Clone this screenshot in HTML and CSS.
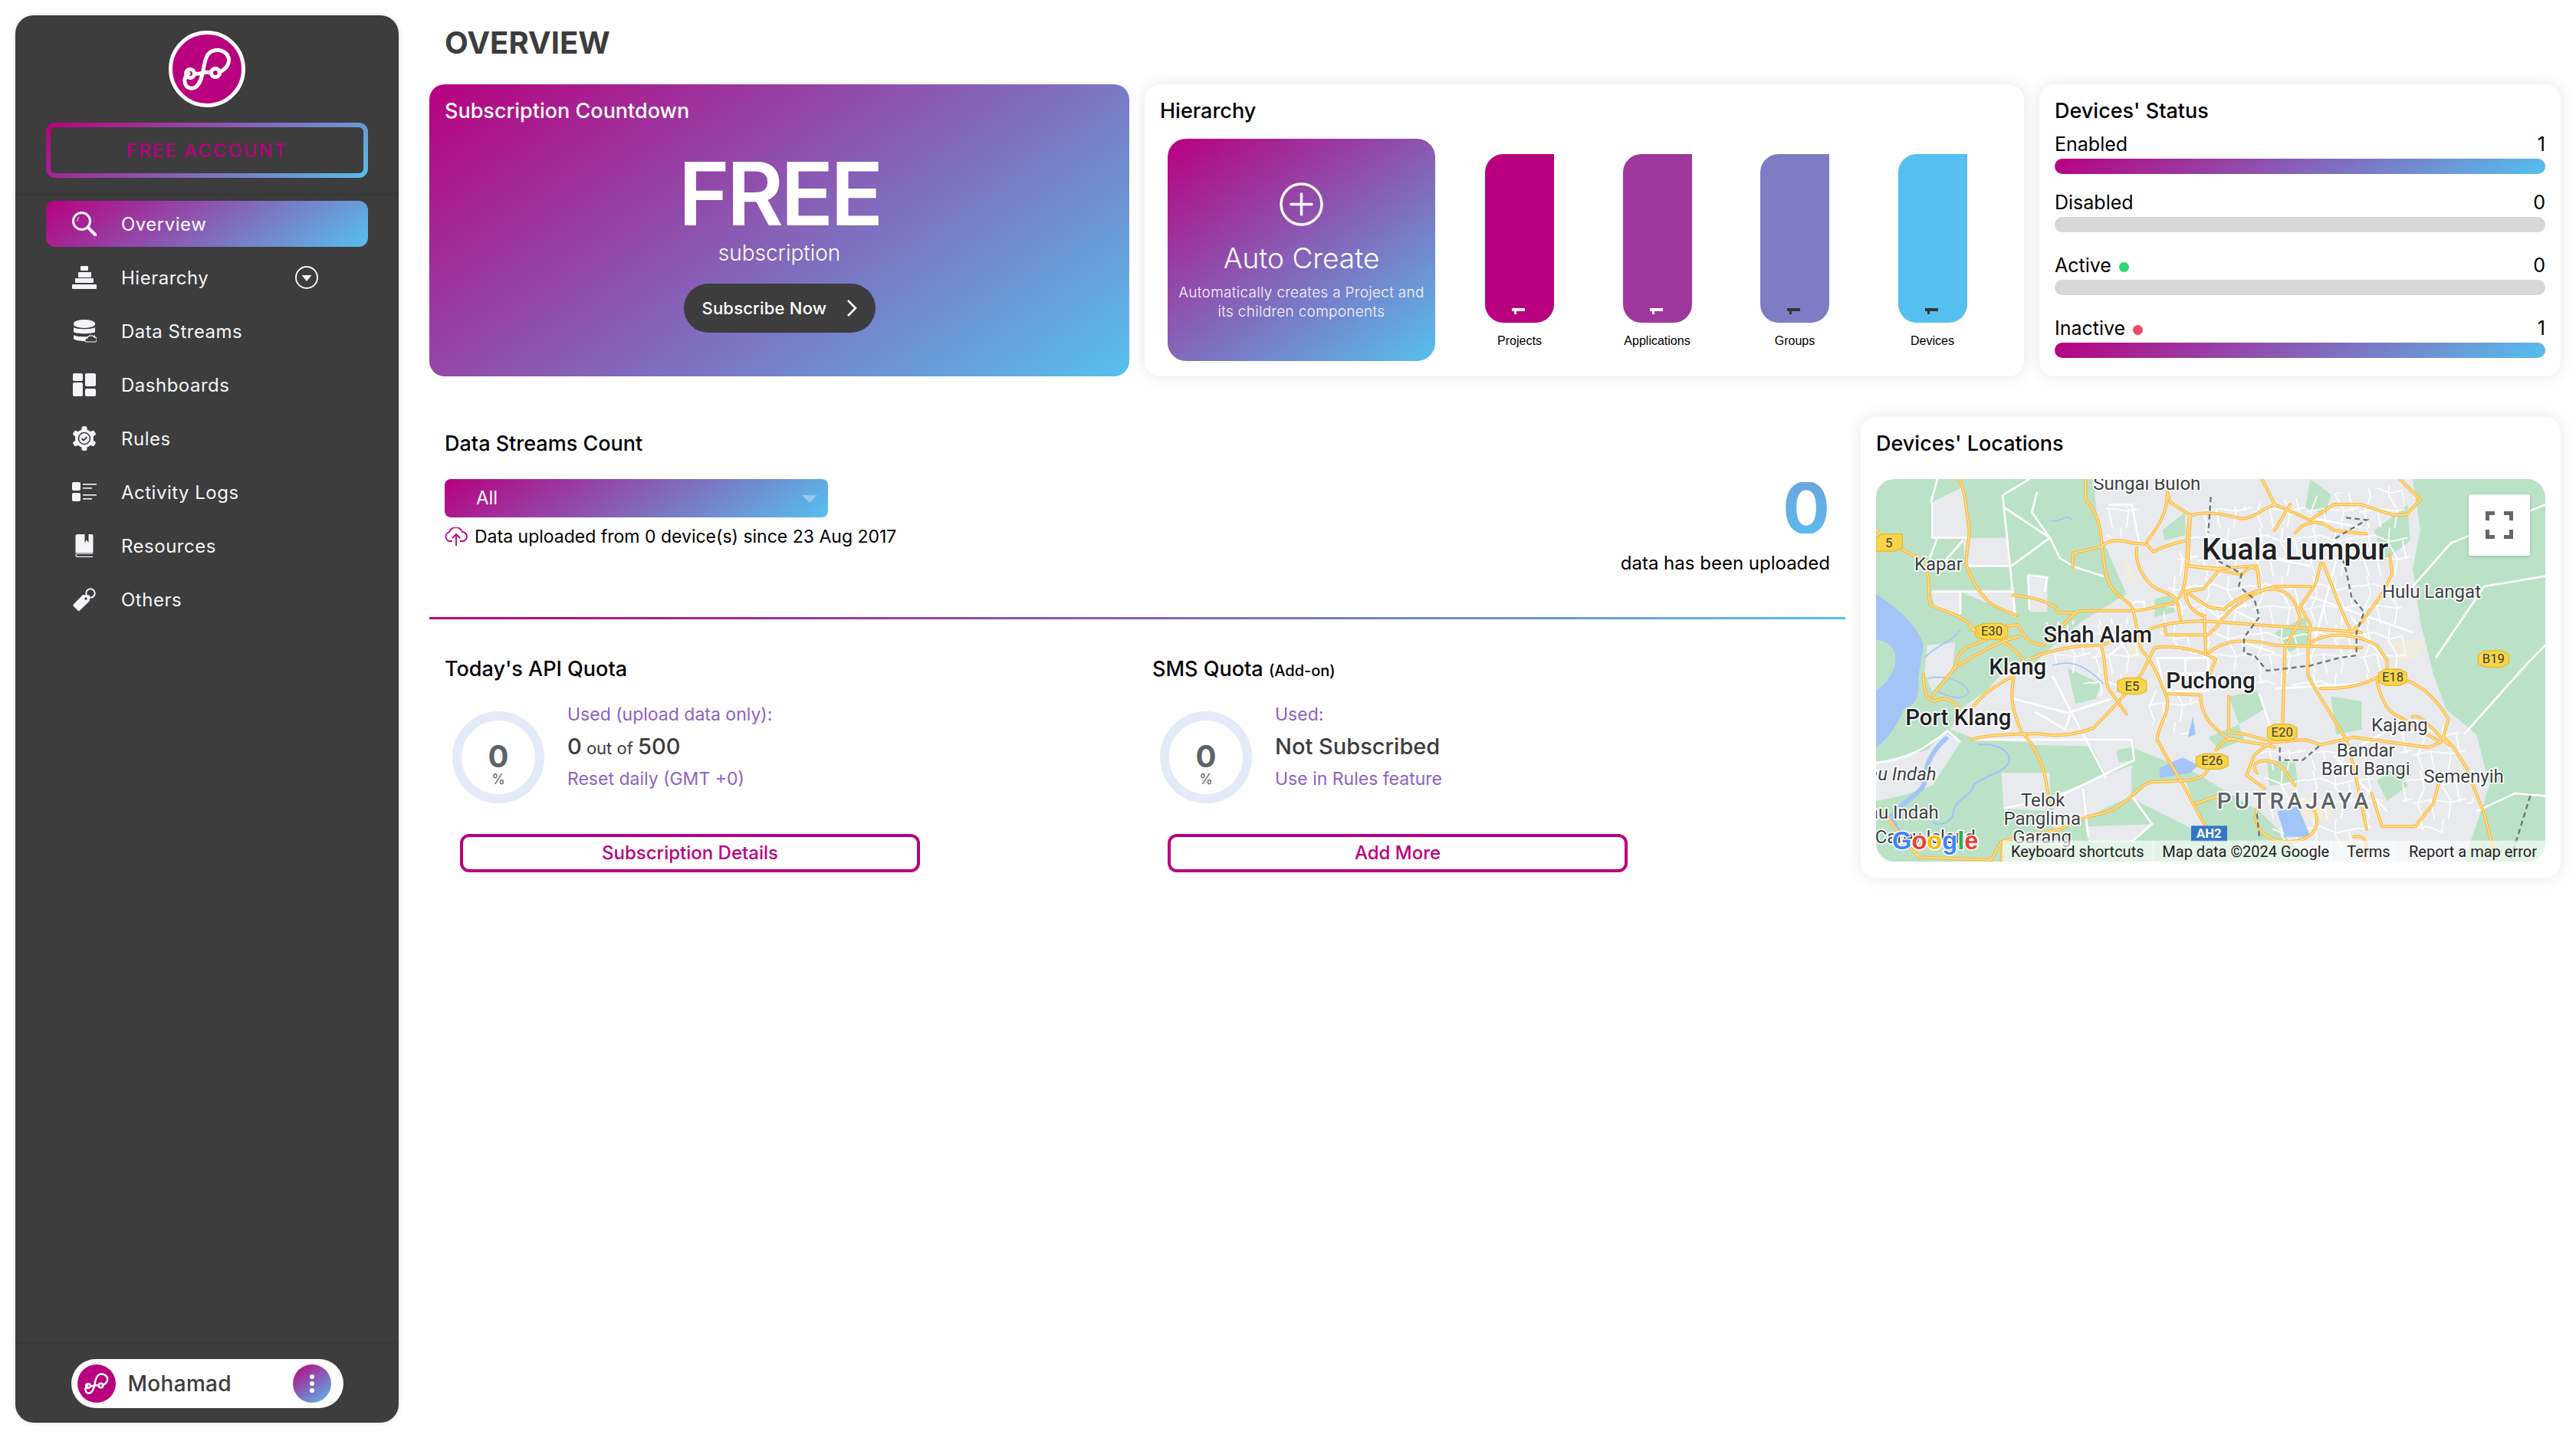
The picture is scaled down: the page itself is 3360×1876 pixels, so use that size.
FILE: index.html
```html
<!DOCTYPE html>
<html>
<head>
    <title>Overview</title>
    <link rel="stylesheet" href="styles.css">
</head>
<body>
    <svg class="defs" width="0" height="0">
        <symbol id="logo-mark" viewBox="0 0 100 100">
            <g fill="none" stroke="#fff" stroke-width="5" stroke-linecap="round">
                <path d="M66 54C76 50 80 42 78 35 75 26 64 23 56 27 48 31 47 42 45 52 43 62 40 74 31 75 24 76 20 70 21 63 22 59 24 58 26 56"/>
                <path d="M34 56C40 58 47 52 55 55"/>
                <circle cx="28" cy="56" r="5.500"/>
                <circle cx="61" cy="55" r="5.500"/>
            </g>
        </symbol>
        <pattern id="street-mesh" width="210" height="190" patternUnits="userSpaceOnUse">
            <path d="M0 40L60 30 120 55 210 35M30 0L45 70 20 130 40 190M120 0L115 60 150 120 140 190M0 130L70 115 150 125 210 110M70 115L85 190M170 50L185 125" fill="none" stroke="#fff" stroke-width="5"/>
        </pattern>
    </svg>

    <div class="page">
        <aside class="sidebar">
            <div class="logo">
                <svg width="100" height="100" viewBox="0 0 100 100">
                    <circle cx="50" cy="50" r="47.500" fill="#b8007f" stroke="#fff" stroke-width="5"/>
                    <use href="#logo-mark" width="100" height="100"/>
                </svg>
            </div>
            <div class="account-badge"><div class="account-badge-inner">FREE ACCOUNT</div></div>
            <div class="side-divider"></div>

            <nav class="nav">
                <a class="nav-item active">
                    <svg class="nav-icon" viewBox="0 0 32 32">
                        <circle cx="12.500" cy="12.500" r="11" fill="none" stroke="#fff" stroke-width="3"/>
                        <path d="M7 13c0-2 1-5 2.500-6" fill="none" stroke="#fff" stroke-width="1"/>
                        <path d="M21 21l9.500 9.500" stroke="#fff" stroke-width="4" stroke-linecap="round"/>
                    </svg>
                    <span>Overview</span>
                </a>
                <a class="nav-item">
                    <svg class="nav-icon" viewBox="0 0 32 30">
                        <rect x="11" y="0" width="10" height="6" rx="1"/>
                        <rect x="8" y="8" width="17" height="7" rx="1"/>
                        <rect x="4" y="16" width="24" height="6" rx="1"/>
                        <rect x="0" y="24" width="32" height="6" rx="1"/>
                    </svg>
                    <span>Hierarchy</span>
                    <svg class="nav-caret" width="30" height="30" viewBox="0 0 30 30">
                        <circle cx="15" cy="15" r="14" fill="none" stroke="#f3f4f8" stroke-width="2"/>
                        <path d="M8.500 12h13L15 20z" fill="#f3f4f8"/>
                    </svg>
                </a>
                <a class="nav-item">
                    <svg class="nav-icon" viewBox="0 0 32 30">
                        <path d="M2 5a14 5 0 0 1 28 0v1a14 5 0 0 1-28 0z"/>
                        <path d="M2 10c3 3 25 3 28 0v6c-3 3-25 3-28 0z"/>
                        <path d="M2 20c3 3 25 3 28 0v5c0 4-25 4-28 0z"/>
                        <path d="M19 29c-3 0-3-5 1-5 1-4 8-4 9-1 4-1 4 6 1 6z" fill="#3d3d3d" stroke="#f3f4f8" stroke-width="1.200"/>
                    </svg>
                    <span>Data Streams</span>
                </a>
                <a class="nav-item">
                    <svg class="nav-icon" viewBox="-1 0 32 30">
                        <rect x="0" y="0" width="13" height="10" rx="2"/>
                        <rect x="0" y="12" width="13" height="18" rx="2"/>
                        <rect x="16" y="0" width="14" height="17" rx="2"/>
                        <rect x="16" y="20" width="14" height="10" rx="2"/>
                    </svg>
                    <span>Dashboards</span>
                </a>
                <a class="nav-item">
                    <svg class="nav-icon" viewBox="0 0 32 32">
                        <g>
                            <circle cx="16" cy="16" r="12"/>
                            <rect x="12.500" y="0" width="7" height="32" rx="2.500"/>
                            <rect x="12.500" y="0" width="7" height="32" rx="2.500" transform="rotate(60 16 16)"/>
                            <rect x="12.500" y="0" width="7" height="32" rx="2.500" transform="rotate(120 16 16)"/>
                        </g>
                        <circle cx="16" cy="16" r="7.500" fill="none" stroke="#3d3d3d" stroke-width="1.600"/>
                        <path d="M12.500 16l2.500 2.500 4.500-4.500" fill="none" stroke="#3d3d3d" stroke-width="1.800"/>
                    </svg>
                    <span>Rules</span>
                </a>
                <a class="nav-item">
                    <svg class="nav-icon" viewBox="0 0 32 26">
                        <rect x="0" y="0" width="11" height="11" rx="2"/>
                        <rect x="0" y="14" width="11" height="11" rx="2"/>
                        <rect x="14" y="2" width="18" height="1.600"/>
                        <rect x="14" y="7" width="12" height="1.600"/>
                        <rect x="14" y="16" width="18" height="1.600"/>
                        <rect x="14" y="21" width="12" height="1.600"/>
                    </svg>
                    <span>Activity Logs</span>
                </a>
                <a class="nav-item">
                    <svg class="nav-icon" viewBox="-4.500 0 32 30">
                        <path d="M2.500 0H12v11l2.500-3.500L17 11V0h4a2 2 0 0 1 2 2v22H2.500A2.500 2.500 0 0 0 0 25V2.500A2.500 2.500 0 0 1 2.500 0z"/>
                        <path d="M22.500 25.200H2.600a1.900 1.900 0 0 0 0 4.100h19.900" fill="none" stroke="#f3f4f8" stroke-width="1.200"/>
                    </svg>
                    <span>Resources</span>
                </a>
                <a class="nav-item">
                    <svg class="nav-icon" viewBox="-1 0 32 30">
                        <path d="M.8 21.500L13 9l9 .5V17L9 29.500c-.8.7-1.700.7-2.500 0L1 24c-.7-.7-.7-1.700-.2-2.500z"/>
                        <circle cx="17" cy="14" r="1.700" fill="#3d3d3d"/>
                        <circle cx="23" cy="7" r="5.700" fill="none" stroke="#f3f4f8" stroke-width="2"/>
                    </svg>
                    <span>Others</span>
                </a>
            </nav>

            <div class="side-footer">
                <div class="user-pill">
                    <div class="user-avatar"><svg width="50" height="50"><use href="#logo-mark" width="50" height="50"/></svg></div>
                    <span class="user-name">Mohamad</span>
                    <div class="user-menu"><i></i><i></i><i></i></div>
                </div>
            </div>
        </aside>

        <main class="main">
            <h1 class="page-title">OVERVIEW</h1>

            <section class="top-row">
                <div class="card plan-card">
                    <h2 class="card-title">Subscription Countdown</h2>
                    <div class="plan-name">FREE</div>
                    <div class="plan-sub">subscription</div>
                    <a class="subscribe-btn">
                        <span>Subscribe Now</span>
                        <svg width="14" height="24" viewBox="0 0 14 24"><path d="M2 2l10 10L2 22" fill="none" stroke="#fff" stroke-width="2.500"/></svg>
                    </a>
                </div>

                <div class="card hierarchy-card">
                    <h2 class="card-title">Hierarchy</h2>
                    <div class="hierarchy-body">
                        <div class="auto-create">
                            <svg width="57" height="57" viewBox="0 0 57 57">
                                <circle cx="28.500" cy="28.500" r="26.500" fill="none" stroke="#fff" stroke-width="3.500"/>
                                <path d="M28.500 15v27M15 28.500h27" stroke="#fff" stroke-width="3.500" stroke-linecap="round"/>
                            </svg>
                            <div class="auto-title">Auto Create</div>
                            <p class="auto-desc">Automatically creates a Project and<br>its children components</p>
                        </div>
                        <div class="levels">
                            <div class="level"><div class="level-bar bar-projects"><i class="tick"></i></div><span>Projects</span></div>
                            <div class="level"><div class="level-bar bar-apps"><i class="tick"></i></div><span>Applications</span></div>
                            <div class="level"><div class="level-bar bar-groups"><i class="tick dark"></i></div><span>Groups</span></div>
                            <div class="level"><div class="level-bar bar-devices"><i class="tick dark"></i></div><span>Devices</span></div>
                        </div>
                    </div>
                </div>

                <div class="card status-card">
                    <h2 class="card-title">Devices' Status</h2>
                    <div class="stat first">
                        <div class="stat-head"><span>Enabled</span><span>1</span></div>
                        <div class="stat-bar filled"></div>
                    </div>
                    <div class="stat">
                        <div class="stat-head"><span>Disabled</span><span>0</span></div>
                        <div class="stat-bar"></div>
                    </div>
                    <div class="stat wide">
                        <div class="stat-head"><span>Active <i class="dot dot-green"></i></span><span>0</span></div>
                        <div class="stat-bar"></div>
                    </div>
                    <div class="stat wide">
                        <div class="stat-head"><span>Inactive <i class="dot dot-red"></i></span><span>1</span></div>
                        <div class="stat-bar filled"></div>
                    </div>
                </div>
            </section>

            <section class="bottom-row">
                <div class="usage">
                    <div class="streams">
                        <div class="streams-left">
                            <h2 class="card-title">Data Streams Count</h2>
                            <div class="stream-select">All</div>
                            <div class="upload-note">
                                <svg width="30" height="24" viewBox="0 0 30 24">
                                    <path d="M10 18H7a6 6 0 0 1-1-11.800A9 9 0 0 1 23 6a6 6 0 0 1 0 12h-3" fill="none" stroke="#b8007f" stroke-width="1.800"/>
                                    <path d="M15 24V10M10 14l5-5 5 5" fill="none" stroke="#b8007f" stroke-width="1.800"/>
                                </svg>
                                <span>Data uploaded from 0 device(s) since 23 Aug 2017</span>
                            </div>
                        </div>
                        <div class="streams-right">
                            <div class="streams-count">0</div>
                            <div class="streams-label">data has been uploaded</div>
                        </div>
                    </div>
                    <div class="gradient-line"></div>
                    <div class="quotas">
                        <div class="quota">
                            <h2 class="card-title">Today's API Quota</h2>
                            <div class="quota-body">
                                <div class="ring"><b>0</b><span>%</span></div>
                                <div class="quota-info">
                                    <div class="quota-note">Used (upload data only):</div>
                                    <div class="quota-value"><span class="big">0</span> out of <span class="big">500</span></div>
                                    <div class="quota-note">Reset daily (GMT +0)</div>
                                </div>
                            </div>
                            <a class="outline-btn">Subscription Details</a>
                        </div>
                        <div class="quota">
                            <h2 class="card-title">SMS Quota <small>(Add-on)</small></h2>
                            <div class="quota-body">
                                <div class="ring"><b>0</b><span>%</span></div>
                                <div class="quota-info">
                                    <div class="quota-note">Used:</div>
                                    <div class="quota-value"><span class="big">Not Subscribed</span></div>
                                    <div class="quota-note">Use in Rules feature</div>
                                </div>
                            </div>
                            <a class="outline-btn">Add More</a>
                        </div>
                    </div>
                </div>

                <div class="card map-card">
                    <h2 class="card-title">Devices' Locations</h2>
                    <div class="map">
                        <svg class="map-svg" viewBox="0 0 2619 1497" width="873" height="499">
                            <rect width="2619" height="1497" fill="#bbe2c6"/>
                            <!-- built up areas -->
                            <g fill="#e8eaed">
                                <path d="M850 0L2100 0 2130 200 2100 350 2130 560 2180 760 2230 900 2350 1000 2400 1200 2300 1497 1700 1497 1500 1300 1250 1150 1000 1050 600 1040 530 850 640 700 800 560 980 450 870 200z"/>
                                <path d="M220 90L340 30 360 230 500 240 500 340 350 340 340 230 220 230z"/>
                                <path d="M370 230H510L530 340H350z"/>
                                <path d="M330 440H540L550 530 470 500 400 470z"/>
                                <path d="M215 440H330V530L230 500z"/>
                                <path d="M530 720L660 800 760 920 830 1040 600 1030 400 1020 290 980 330 900 430 830z"/>
                                <path d="M840 1040L1010 1040 1010 1100 900 1160z"/>
                                <path d="M490 1150H680L680 1300 500 1290z"/>
                                <path d="M595 375L670 385 670 520 600 520z"/>
                                <path d="M200 650L310 640 300 740 220 830 190 760z"/>
                                <path d="M0 1110L200 1060 270 990 330 1030 220 1200 100 1240 0 1260z"/>
                                <path d="M690 1240L1000 1120 1000 1240 830 1320 700 1370z"/>
                                <path d="M830 1360L1080 1350 1000 1420 830 1420z"/>
                                <path d="M1080 1180L1210 1180 1300 1400 1000 1250z"/>
                            </g>
                            <g fill="#bbe2c6">
                                <path d="M1090 470L1160 450 1170 520 1090 540z"/>
                                <path d="M1120 200L1210 130 1210 220 1130 240z"/>
                                <path d="M1700 0L1780 60 1760 140 1680 110z"/>
                                <path d="M1380 850L1490 830 1520 900 1420 960z"/>
                                <path d="M750 740L880 800 860 860 780 880z"/>
                                <path d="M1780 850L1900 870 1900 980 1800 1000z"/>
                                <path d="M1950 200L2080 100 2090 240 1990 320z"/>
                                <path d="M1530 1100L1640 1110 1650 1190 1540 1200z"/>
                                <path d="M940 1060L1000 1050 1010 1100 950 1110z"/>
                                <path d="M1300 1010L1420 960 1440 1020 1340 1060z"/>
                                <path d="M1960 1180L2050 1120 2080 1200 2000 1260z"/>
                                <path d="M1560 600L1680 540 1700 640 1610 680z"/>
                            </g>
                            <g fill="#f1ecdd">
                                <path d="M970 300L1010 360 1020 420 980 390z"/>
                                <path d="M980 640L1040 650 1060 700 990 700z"/>
                                <path d="M1640 1240L1790 1260 1780 1340 1660 1330z"/>
                                <path d="M2020 640L2150 620 2120 700 2050 710z"/>
                            </g>
                            <!-- street grid over the dense parts -->
                            <g fill="url(#street-mesh)">
                                <path d="M1230 130L2060 20 2090 330 2050 560 2080 720 1880 820 1500 800 1300 700 1100 650 1140 440z"/>
                                <path d="M660 560L1000 540 1040 760 880 850 700 720z"/>
                                <path d="M1500 1060L1900 1060 2000 1300 1860 1440 1560 1420z"/>
                                <path d="M1060 820L1260 860 1220 1010 1070 960z"/>
                                <path d="M900 90L1030 120 1040 220 900 230z"/>
                                <path d="M2050 900L2300 1000 2340 1260 2200 1400 2060 1340z"/>
                            </g>
                            <!-- water -->
                            <path d="M0 450C80 500 170 580 185 650L165 780C170 850 160 880 110 900 90 940 60 1010 0 1050zM0 630C60 630 90 680 70 740 50 790 20 820 0 825z" fill="#a3c4f7" fill-rule="evenodd"/>
                            <g fill="none" stroke="#a3c4f7">
                                <path d="M400 1040C480 1030 530 1070 520 1110 500 1150 400 1170 380 1200 380 1240 300 1250 300 1320 280 1350 240 1360 220 1340" stroke-width="7"/>
                                <path d="M280 1010C220 1060 190 1120 190 1190 170 1240 100 1260 60 1320 80 1370 100 1400 120 1420" stroke-width="18"/>
                                <path d="M190 700C230 650 300 640 330 590M200 780C290 760 370 810 360 840 330 870 280 850 240 830" stroke-width="5"/>
                                <path d="M680 160C720 180 730 130 770 160M690 730C770 700 830 740 890 800" stroke-width="5"/>
                            </g>
                            <path d="M1110 1130L1200 1090 1260 1120 1230 1150 1110 1170zM1240 930L1250 1000 1220 1010zM1570 1300L1650 1280 1700 1400 1600 1400z" fill="#a3c4f7"/>
                            <!-- minor roads -->
                            <g class="minor-roads">
                                <path d="M495 60L545 540M500 110L680 230M680 230L530 340M350 340H530M220 230H360M215 90L240 0M220 90V230M330 440V530M220 440H540M240 230L210 310M340 240L270 320M500 60L600 0M630 50L610 130 680 230 720 310 780 345 890 380"/>
                                <path d="M690 770L900 1170M540 860L750 915 920 860M620 910L740 980 760 920M380 1020H1000L1010 1100 720 1240 500 1290M0 1110C120 1100 200 1050 280 985L330 1030M810 1210L830 1400M1000 1240L1080 1350 1000 1420M595 375L670 385 660 440M595 375L600 510"/>
                                <path d="M1100 700H1300V830H1130zM1130 760H1290M1210 700V830M1010 480H1050V510H990zM1440 640L1560 680M1370 500L1500 560M1240 460L1340 540 1450 490M910 100H1000L1030 250M1500 840L1560 1020M800 600L900 700 1000 620"/>
                                <path d="M1600 130L1900 190M1700 460L2100 600M1560 820L1900 800M1800 320L1720 620M2100 420L2250 250 2619 100M2190 700L2380 420 2619 380M2300 1000L2550 720 2619 650M2350 1300L2500 1230 2619 1240M1900 1040L2050 960M1500 300L1700 340M1860 540L1980 700M1790 1080L2000 1300"/>
                            </g>
                            <!-- highways, drawn twice for the casing -->
                            <g id="hw" fill="none">
                                <path class="r" d="M325 0C350 50 350 100 358 150 375 210 355 260 352 330 370 390 400 440 440 480 480 510 520 520 552 535"/>
                                <path class="r" d="M0 195L20 225 100 275 170 310C220 370 200 420 210 490 240 510 300 520 340 550 380 570 385 600 400 615L440 625"/>
                                <path class="r" d="M535 455C600 460 660 475 700 500L715 522 775 525C780 520 800 515 830 515L1000 515C1060 515 1100 495 1150 490 1200 470 1210 420 1215 340L1220 200 1228 140 1150 90 1140 50"/>
                                <path class="r" d="M780 525C740 560 700 610 650 650"/>
                                <path class="r" d="M610 700C680 670 760 650 880 650L1040 600C1080 580 1130 560 1280 555L1560 575 1900 600"/>
                                <path class="r" d="M820 0V80C850 120 870 140 880 220 890 300 890 370 920 420 940 460 980 470 1000 500 1020 540 1020 620 1040 670 1080 710 1110 780 1140 860 1150 920 1100 970 1100 1020 1130 1080 1190 1170 1230 1250L1300 1380"/>
                                <path class="r" d="M770 345V290L880 265C910 235 950 235 1000 250L1060 255 1085 285C1120 265 1170 250 1215 240"/>
                                <path class="r" d="M1060 245C1100 190 1140 140 1140 50"/>
                                <path class="r" d="M1020 270C1010 340 1060 410 1100 430 1140 450 1170 450 1180 490L1192 550"/>
                                <path class="r" d="M370 590L555 570C575 600 580 640 650 650"/>
                                <path class="r" d="M440 625C380 650 320 660 315 720L300 750 220 850M300 745C400 680 470 640 560 615M500 640C540 660 560 690 580 710"/>
                                <path class="r" d="M185 765C190 830 190 860 230 870 270 845 310 870 330 910"/>
                                <path class="r" d="M380 890C430 830 480 800 540 770 530 830 520 880 570 990 620 1040 670 1130 675 1270"/>
                                <path class="r" d="M375 1020C420 1000 540 1000 630 995 700 1010 780 1000 850 975 900 920 950 880 1040 760L1090 660C1150 650 1250 660 1330 705L1290 800"/>
                                <path class="r" d="M880 650C900 700 895 800 910 820L980 920"/>
                                <path class="r" d="M1140 840L1270 845C1270 900 1290 960 1380 1015 1440 1030 1500 1030 1560 1050"/>
                                <path class="r" d="M1330 1060C1350 1030 1370 1020 1400 1015M1250 1270L1340 1240"/>
                                <path class="r" d="M490 1490L500 1415 720 1370 830 1320C900 1310 950 1290 1000 1240 1040 1200 1070 1180 1100 1185L1220 1180C1270 1170 1300 1160 1300 1120"/>
                                <path class="r" d="M0 1300C60 1310 80 1400 170 1480L450 1490 490 1420"/>
                                <path class="r" d="M1230 145C1270 125 1330 130 1430 155 1480 155 1500 120 1560 100L1510 0"/>
                                <path class="r" d="M1215 340L1340 355 1430 375C1460 340 1480 340 1495 360L1500 420"/>
                                <path class="r" d="M1210 440L1280 430 1340 360M1210 440C1210 490 1250 530 1285 535L1290 680"/>
                                <path class="r" d="M1300 680C1350 640 1420 615 1560 650L1900 660"/>
                                <path class="r" d="M1130 580L1135 610H1300L1340 570C1370 520 1450 450 1560 420L1700 420"/>
                                <!-- east half -->
                                <path class="r" d="M1560 100L1700 160 1760 120 1790 100 1900 100 2020 140 2075 140 2130 80 2050 0"/>
                                <path class="r" d="M1230 140L1220 330M1560 200L1620 100"/>
                                <path class="r" d="M1640 210C1690 150 1750 165 1790 200L1920 215"/>
                                <path class="r" d="M1220 340L1340 350 1490 340 1500 420"/>
                                <path class="r" d="M1210 440L1300 500 1360 510C1420 460 1490 430 1560 430 1630 440 1650 500 1660 550L1600 660 1590 991"/>
                                <path class="r" d="M1740 330L1720 410 1660 500 1700 570 1690 670V770L1730 840 1840 1020 1870 1130 1920 1370"/>
                                <path class="r" d="M1700 640C1780 590 1880 610 1960 650L2000 710V776H2030C2130 790 2200 870 2240 940L2220 1010 2260 1050 2310 1130 2380 1310 2420 1470"/>
                                <path class="r" d="M1740 820C1830 820 1900 810 1960 776"/>
                                <path class="r" d="M1960 790C1980 880 2010 920 2050 930L2140 990 2210 1030 2160 1050 2010 1030 1870 1010 1740 1040 1680 1020 1560 1030 1450 1000 1380 990V850"/>
                                <path class="r" d="M1590 1010L1530 1040 1480 1080 1450 1160 1520 1210"/>
                                <path class="r" d="M1490 1150C1450 1090 1560 1090 1590 1130L1640 1200"/>
                                <path class="r" d="M1490 1290C1470 1370 1530 1420 1620 1420 1730 1410 1740 1340 1710 1290"/>
                                <path class="r" d="M1940 1230L1980 1360 2110 1360 2180 1270 2210 1160"/>
                                <path class="r" d="M1980 450L1900 560 1860 600 1820 510 1750 330"/>
                                <path class="r" d="M2010 300L2020 370 1980 450"/>
                                <path class="r" d="M2100 930C2130 920 2160 960 2240 1040"/>
                                <path class="r" d="M1870 1400C1920 1390 1930 1430 1910 1497"/>
                            </g>
                            <use href="#hw" class="hw-casing"/>
                            <use href="#hw" class="hw-fill"/>
                            <!-- district boundaries -->
                            <path class="boundary" d="M1310 70L1300 210M1340 320L1430 370 1420 420 1480 470 1500 540 1440 620 1440 680 1480 690 1530 750 1700 730 1810 700 1880 690V600L1910 520 1860 460 1840 360 1800 230 1920 160 1830 150M1580 1050V1100H1670L1740 1040M1490 1310L1500 1400M2560 1240L2480 1497"/>
                            <!-- shields -->
                            <g class="shield">
                                <path d="M0 228L28 215H103V268L75 282H0z"/>
                                <path d="M390 578L420 565H490L515 578V616L490 628H420L390 616z"/>
                                <path d="M945 790L975 778H1030L1058 790V830L1030 842H975L945 830z"/>
                                <path d="M1253 1087L1283 1075H1350L1377 1087V1123L1350 1135H1283L1253 1123z"/>
                                <path d="M1967 758L1995 744H2050L2077 758V794L2050 808H1995L1967 794z"/>
                                <path d="M2356 686L2385 672H2447L2476 686V722L2447 736H2385L2356 722z"/>
                                <path d="M1531 973L1560 959H1618L1647 973V1009L1618 1023H1560L1531 1009z"/>
                            </g>
                            <path d="M1233 1357H1374V1418H1233z" fill="#3676c6"/>
                            <g class="shield-text">
                                <text x="50" y="266">5</text>
                                <text x="453" y="613">E30</text>
                                <text x="1002" y="828">E5</text>
                                <text x="1315" y="1120">E26</text>
                                <text x="2022" y="793">E18</text>
                                <text x="2416" y="721">B19</text>
                                <text x="1589" y="1008">E20</text>
                            </g>
                            <text class="shield-blue" x="1303" y="1405">AH2</text>
                            <!-- place names -->
                            <g class="place">
                                <text x="850" y="42">Sungai Buloh</text>
                                <text x="150" y="358">Kapar</text>
                                <text x="1980" y="464">Hulu Langat</text>
                                <text x="1938" y="988">Kajang</text>
                                <text x="1916" y="1086" text-anchor="middle">Bandar</text>
                                <text x="1916" y="1159" text-anchor="middle">Baru Bangi</text>
                                <text x="2143" y="1187">Semenyih</text>
                                <text class="italic" x="236" y="1180" text-anchor="end">au Indah</text>
                                <text x="245" y="1330" text-anchor="end">au Indah</text>
                                <text x="653" y="1280" text-anchor="middle">Telok</text>
                                <text x="650" y="1352" text-anchor="middle">Panglima</text>
                                <text x="650" y="1425" text-anchor="middle">Garang</text>
                                <text x="-4" y="1425">Carey Island</text>
                            </g>
                            <g class="place place-big">
                                <text class="kl" x="1275" y="315">Kuala Lumpur</text>
                                <text x="655" y="640">Shah Alam</text>
                                <text x="442" y="765">Klang</text>
                                <text x="1135" y="820">Puchong</text>
                                <text x="115" y="963">Port Klang</text>
                            </g>
                            <text class="place-region" x="1334" y="1290">PUTRAJAYA</text>
                            <!-- attribution -->
                            <rect x="495" y="1415" width="2124" height="82" fill="#fff" opacity=".62"/>
                            <path d="M1085 1415v82M1780 1415v82M2025 1415v82" stroke="#fff" stroke-width="3"/>
                            <g class="attribution">
                                <text x="528" y="1480">Keyboard shortcuts</text>
                                <text x="1120" y="1480">Map data ©2024 Google</text>
                                <text x="1843" y="1480">Terms</text>
                                <text x="2085" y="1480">Report a map error</text>
                            </g>
                            <text class="google" x="63" y="1450"><tspan fill="#4285f4">G</tspan><tspan fill="#ea4335">o</tspan><tspan fill="#fbbc05">o</tspan><tspan fill="#4285f4">g</tspan><tspan fill="#34a853">l</tspan><tspan fill="#ea4335">e</tspan></text>
                        </svg>
                        <div class="map-fullscreen">
                            <svg width="36" height="36" viewBox="0 0 36 36">
                                <path d="M2.500 12V2.500H12M24 2.500h9.500V12M33.500 24v9.500H24M12 33.500H2.500V24" fill="none" stroke="#666" stroke-width="5"/>
                            </svg>
                        </div>
                    </div>
                </div>
            </section>
        </main>
    </div>
</body>
</html>
```

FILE: styles.css
```css
* {
    box-sizing: border-box;
}

body {
    margin: 0;
    background-color: #fff;
    font-family: Inter, "Noto Sans", sans-serif;
    color: #000;
}

.defs {
    position: absolute;
}

.page {
    display: flex;
    width: 3360px;
    height: 1876px;
    overflow: hidden;
}

/* sidebar */
.sidebar {
    display: flex;
    flex-direction: column;
    flex: none;
    width: 500px;
    height: 1836px;
    margin: 20px 0 0 20px;
    background-color: #3d3d3d;
    border-radius: 24px;
    box-shadow: 0 0 6px rgba(0, 0, 0, 0.15);
}

.logo {
    display: flex;
    justify-content: center;
    height: 100px;
    margin-top: 20px;
}

.account-badge {
    height: 72px;
    margin: 20px 40px 0;
    padding: 6px;
    border-radius: 12px;
    background: linear-gradient(145deg, #b8007f, #55c0ef);
}

.account-badge-inner {
    display: flex;
    align-items: center;
    justify-content: center;
    height: 100%;
    border-radius: 6px;
    background-color: #3d3d3d;
    color: #b8007f;
    font-size: 24px;
    font-weight: 500;
    letter-spacing: 2px;
}

.side-divider {
    height: 6px;
    margin-top: 20px;
    background: linear-gradient(#383838, #3d3d3d);
}

.nav {
    display: flex;
    flex-direction: column;
    gap: 10px;
    margin: 4px 40px 0;
}

.nav-item {
    display: flex;
    align-items: center;
    height: 60px;
    padding-left: 34px;
    border-radius: 12px;
    color: #f3f4f8;
    font-size: 24px;
    font-weight: 400;
    letter-spacing: 0.5px;
}

.nav-item.active {
    background: linear-gradient(145deg, #b8007f, #55c0ef);
    color: #fff;
}

.nav-icon {
    flex: none;
    width: 32px;
    height: 32px;
    margin-right: 32px;
    fill: #f3f4f8;
}

.nav-caret {
    margin-left: auto;
    margin-right: 65px;
}

.side-footer {
    margin-top: auto;
    height: 104px;
    padding-top: 20px;
    border-top: 1px solid #383838;
}

.user-pill {
    display: flex;
    align-items: center;
    width: 355px;
    height: 64px;
    margin: 0 auto;
    padding: 0 16px 0 8px;
    border-radius: 32px;
    background-color: #fff;
}

.user-avatar {
    width: 50px;
    height: 50px;
    border-radius: 50%;
    background-color: #b8007f;
}

.user-name {
    margin-left: 16px;
    color: #3d3d3d;
    font-size: 28px;
    font-weight: 500;
    letter-spacing: 0.3px;
}

.user-menu {
    display: flex;
    flex-direction: column;
    align-items: center;
    justify-content: center;
    gap: 3px;
    width: 50px;
    height: 50px;
    margin-left: auto;
    border-radius: 50%;
    background: linear-gradient(145deg, #b8007f, #55c0ef);
}

.user-menu i {
    width: 6px;
    height: 6px;
    border-radius: 50%;
    background-color: #fff;
}

/* main area */
.main {
    flex: none;
    width: 2780px;
    margin-left: 40px;
}

.page-title {
    height: 40px;
    margin: 36px 0 34px 20px;
    color: #3d3d3d;
    font-size: 40px;
    font-weight: 700;
    line-height: 40px;
}

.top-row {
    display: grid;
    grid-template-columns: 913px 1147px 680px;
    gap: 20px;
    height: 380px;
}

.card {
    border-radius: 20px;
    background-color: #fff;
    box-shadow: 0 0 20px rgba(0, 0, 0, 0.1);
    padding: 20px;
}

.card-title {
    height: 30px;
    margin: 0;
    font-size: 27px;
    font-weight: 500;
    line-height: 30px;
}

.card-title small {
    font-size: 20px;
}

/* subscription card */
.plan-card {
    display: flex;
    flex-direction: column;
    align-items: center;
    background: linear-gradient(145deg, #b8007f, #55c0ef);
    box-shadow: none;
    color: #fff;
}

.plan-card .card-title {
    align-self: flex-start;
}

.plan-name {
    margin-top: 51px;
    font-size: 114px;
    font-weight: 600;
    letter-spacing: -4px;
    line-height: 84px;
}

.plan-sub {
    margin-top: 20px;
    font-size: 28px;
    font-weight: 300;
    line-height: 30px;
}

.subscribe-btn {
    display: flex;
    align-items: center;
    justify-content: space-between;
    width: 250px;
    height: 64px;
    margin-top: 25px;
    padding: 0 24px;
    border-radius: 32px;
    background-color: #3d3d3d;
    font-size: 22px;
    font-weight: 500;
    letter-spacing: 0.2px;
}

/* hierarchy card */
.hierarchy-body {
    display: flex;
    margin-top: 21px;
    margin-left: 10px;
}

.auto-create {
    display: flex;
    flex-direction: column;
    align-items: center;
    width: 349px;
    height: 290px;
    padding-top: 57px;
    border-radius: 24px;
    background: linear-gradient(145deg, #b8007f, #55c0ef);
    color: #fff;
}

.auto-title {
    margin-top: 20px;
    font-size: 37px;
    font-weight: 300;
    line-height: 44px;
}

.auto-desc {
    margin: 10px 0 0;
    color: #fbf4fb;
    font-size: 19px;
    font-weight: 300;
    letter-spacing: 0.3px;
    line-height: 25px;
    text-align: center;
}

.levels {
    display: grid;
    grid-template-columns: repeat(4, 90px);
    gap: 89.5px;
    margin-top: 20px;
    margin-left: 65px;
}

.level {
    display: flex;
    flex-direction: column;
    align-items: center;
}

.level span {
    margin-top: 14px;
    font-family: "Liberation Sans", Arial, sans-serif;
    font-size: 16px;
    line-height: 20px;
    white-space: nowrap;
}

.level-bar {
    position: relative;
    width: 90px;
    height: 220px;
    border-radius: 24px 0 24px 24px;
}

.bar-projects { background-color: #b8007f; }
.bar-apps { background-color: #9f389e; }
.bar-groups { background-color: #7d7cc5; }
.bar-devices { background-color: #55c0ef; }

.tick {
    position: absolute;
    left: 35px;
    top: 201px;
    width: 17px;
    height: 4px;
    background-color: #fff;
}

.tick::after {
    content: "";
    position: absolute;
    left: 3px;
    top: 4px;
    width: 3px;
    height: 4px;
    background-color: inherit;
}

.tick.dark {
    background-color: #333;
}

/* status card */
.stat.first {
    margin-top: 13px;
}

.stat {
    margin-top: 22px;
}

.stat.wide {
    margin-top: 28px;
}

.stat-head {
    display: flex;
    justify-content: space-between;
    font-size: 25px;
    font-weight: 400;
    line-height: 30px;
}

.stat-bar {
    height: 20px;
    margin-top: 4px;
    border-radius: 10px;
    background-color: #d6d7d9;
}

.stat-bar.filled {
    background: linear-gradient(145deg, #b8007f, #55c0ef);
}

.dot {
    display: inline-block;
    width: 13px;
    height: 13px;
    margin-left: 3px;
    border-radius: 50%;
}

.dot-green { background-color: #2ed573; }
.dot-red { background-color: #ee4b63; }

/* lower half */
.bottom-row {
    display: grid;
    grid-template-columns: 1847px 913px;
    gap: 20px;
    margin-top: 54px;
}

.streams {
    display: flex;
    justify-content: space-between;
    height: 261px;
    padding: 20px 20px 0;
}

.stream-select {
    position: relative;
    width: 500px;
    height: 50px;
    margin-top: 31px;
    padding-left: 41px;
    border-radius: 8px;
    background: linear-gradient(145deg, #b8007f, #55c0ef);
    color: #fff;
    font-size: 24px;
    line-height: 50px;
}

.stream-select::after {
    content: "";
    position: absolute;
    right: 14px;
    top: 21px;
    border-left: 10px solid transparent;
    border-right: 10px solid transparent;
    border-top: 10px solid rgba(255, 255, 255, 0.35);
}

.upload-note {
    display: flex;
    align-items: center;
    gap: 9px;
    margin-top: 10px;
    font-size: 23px;
    line-height: 30px;
}

.streams-right {
    display: flex;
    flex-direction: column;
    align-items: flex-end;
    padding-top: 65px;
}

.streams-count {
    background: linear-gradient(to bottom, #6aa6df, #5cb9ec);
    -webkit-background-clip: text;
    background-clip: text;
    color: transparent;
    font-size: 92px;
    font-weight: 700;
    line-height: 67px;
}

.streams-label {
    margin-top: 24px;
    font-size: 24px;
    line-height: 30px;
}

.gradient-line {
    height: 3px;
    background: linear-gradient(to right, #b8007f, #55c0ef);
}

.quotas {
    display: grid;
    grid-template-columns: 923px 900px;
    padding: 50px 0 0 20px;
}

.quota-body {
    display: flex;
    margin-top: 29px;
    margin-left: 10px;
}

.ring {
    display: flex;
    flex-direction: column;
    align-items: center;
    flex: none;
    width: 120px;
    height: 120px;
    margin-top: 11px;
    padding-top: 27px;
    border: 12px solid #e4eaf7;
    border-radius: 50%;
    color: #5f6368;
}

.ring b {
    font-size: 40px;
    font-weight: 700;
    line-height: 40px;
}

.ring span {
    font-size: 18px;
    line-height: 20px;
}

.quota-info {
    display: flex;
    flex-direction: column;
    gap: 12px;
    margin-left: 30px;
}

.quota-note {
    color: #8f62c2;
    font-size: 23px;
    line-height: 30px;
}

.quota-value {
    height: 30px;
    color: #3d3d3d;
    font-size: 22px;
    line-height: 30px;
}

.quota-value .big {
    font-size: 29px;
    font-weight: 500;
}

.outline-btn {
    display: block;
    width: 600px;
    height: 50px;
    margin: 40px 0 0 20px;
    border: 4px solid #b8007f;
    border-radius: 12px;
    color: #b8007f;
    font-size: 24px;
    font-weight: 500;
    line-height: 42px;
    text-align: center;
}

/* map */
.map-card {
    height: 601px;
}

.map {
    position: relative;
    width: 873px;
    height: 499px;
    margin-top: 31px;
    border-radius: 24px;
    overflow: hidden;
}

.map-svg {
    display: block;
    font-family: Roboto, sans-serif;
}

.minor-roads {
    fill: none;
    stroke: #fff;
    stroke-width: 8;
}

.r {
    vector-effect: non-scaling-stroke;
    stroke-linecap: round;
    stroke-linejoin: round;
}

.hw-casing {
    stroke: #fdb93a;
    stroke-width: 4px;
}

.hw-fill {
    stroke: #fee29a;
    stroke-width: 1.5px;
}

.boundary {
    fill: none;
    stroke: #6f7378;
    stroke-width: 7;
    stroke-dasharray: 20 14;
}

.shield path {
    fill: #f8d548;
    stroke: #eab92e;
    stroke-width: 4;
}

.shield-text text {
    fill: #3c3c3c;
    font-size: 50px;
    text-anchor: middle;
}

.shield-blue {
    fill: #fff;
    font-size: 50px;
    font-weight: 700;
    text-anchor: middle;
}

.place text,
.place-region {
    paint-order: stroke;
    stroke: #fff;
    stroke-width: 10px;
    stroke-linejoin: round;
}

.place {
    fill: #3c4043;
    font-size: 72px;
}

.place .italic {
    font-style: italic;
}

.place-big {
    fill: #202124;
    font-size: 88px;
    font-weight: 500;
}

.place-big .kl {
    font-size: 118px;
}

.place-region {
    fill: #5f6368;
    font-size: 88px;
    font-weight: 500;
    letter-spacing: 13px;
}

.attribution {
    fill: #222;
    font-size: 60px;
}

.google {
    font-family: "Liberation Sans", Arial, sans-serif;
    font-size: 98px;
    font-weight: 700;
    paint-order: stroke;
    stroke: #fff;
    stroke-width: 9px;
}

.map-fullscreen {
    position: absolute;
    top: 20px;
    right: 20px;
    display: flex;
    align-items: center;
    justify-content: center;
    width: 80px;
    height: 80px;
    border-radius: 2px;
    background-color: #fff;
    box-shadow: 0 1px 4px rgba(0, 0, 0, 0.2);
}
```
